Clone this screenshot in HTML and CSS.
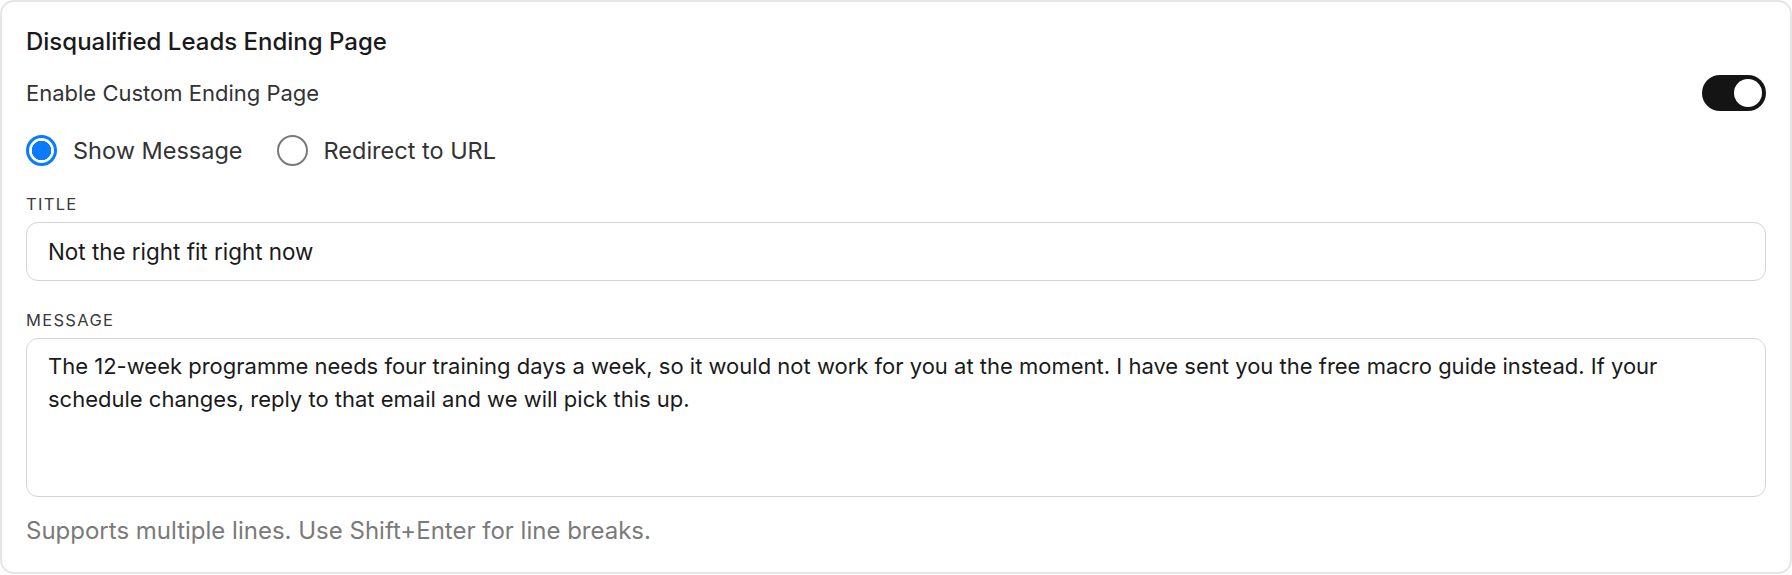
FILE: index.html
```html
<!DOCTYPE html>
<html lang="en">
<head>
<meta charset="utf-8">
<title>Disqualified Leads Ending Page</title>
<link rel="stylesheet" href="styles.css">
</head>
<body>
<section class="card">
  <h2 class="card-title">Disqualified Leads Ending Page</h2>
  <div class="toggle-row">
    <span class="toggle-label">Enable Custom Ending Page</span>
    <span class="switch is-on" role="switch" aria-checked="true"><span class="knob"></span></span>
  </div>
  <div class="radio-group">
    <label class="radio"><input type="radio" name="mode" checked><span>Show Message</span></label>
    <label class="radio"><input type="radio" name="mode"><span>Redirect to URL</span></label>
  </div>
  <div class="field">
    <label class="field-label" for="title">TITLE</label>
    <input id="title" class="text-input" type="text" value="Not the right fit right now">
  </div>
  <div class="field">
    <label class="field-label" for="message">MESSAGE</label>
    <textarea id="message" class="text-area">The 12-week programme needs four training days a week, so it would not work for you at the moment. I have sent you the free macro guide instead. If your schedule changes, reply to that email and we will pick this up.</textarea>
  </div>
  <p class="help">Supports multiple lines. Use Shift+Enter for line breaks.</p>
</section>
</body>
</html>
```

FILE: styles.css
```css
* { box-sizing: border-box; }
html, body {
  margin: 0;
  padding: 0;
  background: #ffffff;
}
body {
  font-family: Inter, "Noto Sans", "Liberation Sans", sans-serif;
  color: #333333;
}
.card {
  width: 1792px;
  height: 574px;
  border: 2px solid #e6e6e6;
  border-radius: 14px;
  padding: 26px 24px 0 24px;
  background: #ffffff;
  display: flex;
  flex-direction: column;
}
.card-title {
  margin: 0;
  font-size: 24px;
  line-height: 28px;
  font-weight: 500;
  color: #1a1a1a;
}
.toggle-row {
  margin-top: 19px;
  height: 36px;
  display: flex;
  align-items: center;
  justify-content: space-between;
}
.toggle-label {
  font-size: 22px;
  color: #333333;
}
.switch {
  width: 64px;
  height: 36px;
  border-radius: 18px;
  background: #141414;
  display: flex;
  align-items: center;
  justify-content: flex-end;
  padding: 0 4px;
}
.knob {
  width: 28px;
  height: 28px;
  border-radius: 50%;
  background: #ffffff;
}
.radio-group {
  margin-top: 23px;
  height: 32px;
  display: flex;
  align-items: center;
  gap: 34px;
}
.radio {
  display: flex;
  align-items: center;
  gap: 16px;
  font-size: 23.5px;
  color: #333333;
}
.radio input {
  appearance: none;
  -webkit-appearance: none;
  margin: 0;
  width: 31px;
  height: 31px;
  border-radius: 50%;
  border: 2px solid #7a7a7a;
  background: #ffffff;
}
.radio input:checked {
  border: 3px solid #0a7aff;
  background: radial-gradient(circle, #0a7aff 0 9.5px, #ffffff 10px);
}
.field {
  display: flex;
  flex-direction: column;
  gap: 8px;
  margin-top: 28px;
}
.field + .field { margin-top: 29px; }
.field-label {
  font-size: 16.5px;
  line-height: 20px;
  letter-spacing: 0.08em;
  color: #3a3a3a;
}
.text-input,
.text-area {
  width: 100%;
  font-family: inherit;
  color: #1a1a1a;
  border: 1.5px solid #d4d4d4;
  border-radius: 12px;
  background: #ffffff;
  outline: none;
}
.text-input {
  height: 59px;
  padding: 0 21px;
  font-size: 22.4px;
}
.text-area {
  height: 159px;
  padding: 11px 40px 11px 21px;
  font-size: 22px;
  line-height: 33px;
  resize: none;
  overflow: hidden;
}
.help {
  margin: 21px 0 0 0;
  font-size: 24px;
  line-height: 26px;
  color: #7a7a7a;
}
```
